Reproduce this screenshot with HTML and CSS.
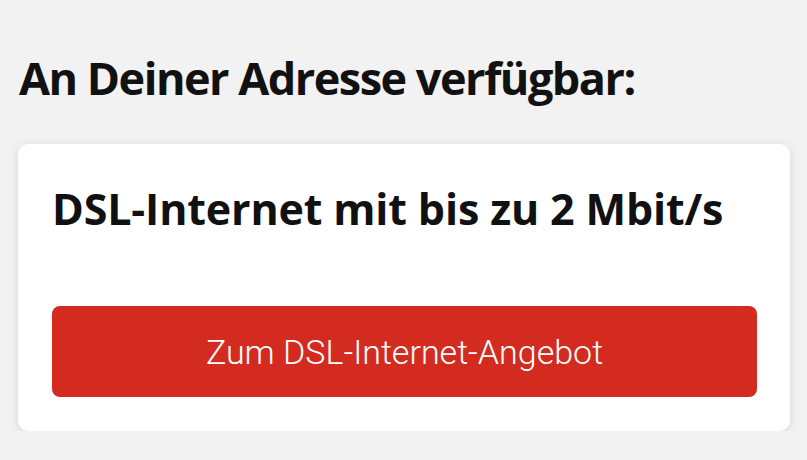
FILE: index.html
```html
<!DOCTYPE html>
<html lang="de">
<head>
  <meta charset="UTF-8" />
  <title>Verfügbarkeit</title>
  <link rel="stylesheet" href="styles.css">
</head>
<body>
  <div class="page">
    <h1 class="headline">An Deiner Adresse verfügbar:</h1>

    <!-- Offer card -->
    <div class="card">
      <h2 class="card-title">DSL-Internet mit bis zu 2 Mbit/s</h2>
      <button class="btn">Zum DSL-Internet-Angebot</button>
    </div>
  </div>
</body>
</html>
```

FILE: styles.css
```css
* { box-sizing: border-box; }
body {
  margin: 0;
  background: #f2f2f2;
  font-family: 'Open Sans', Lato, sans-serif;
  color: #111;
}
.page {
  padding: 50px 17px 0 18px;
}
.headline {
  margin: 0 0 38px 1px;
  font-size: 45px;
  font-weight: 700;
  line-height: 56px;
  letter-spacing: -1.5px;
}
.card {
  background: white;
  border-radius: 10px;
  padding: 38px 33px 34px 34px;
  box-shadow: 0 2px 10px rgba(0,0,0,0.12);
}
.card-title {
  margin: 0 0 70px 0;
  font-size: 43px;
  font-weight: 700;
  line-height: 54px;
  letter-spacing: -0.15px;
}
.btn {
  display: block;
  width: 100%;
  height: 91px;
  background: #d32b1f;
  color: white;
  border: none;
  border-radius: 8px;
  font-family: Roboto, sans-serif;
  font-weight: 300;
  font-size: 34px;
  cursor: pointer;
}
```
